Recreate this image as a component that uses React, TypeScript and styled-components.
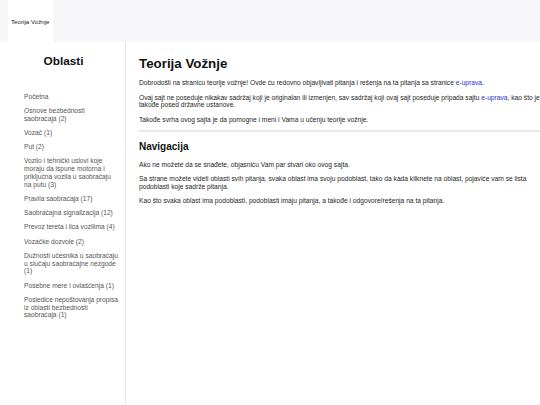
import styled, { createGlobalStyle } from 'styled-components';

const GlobalStyle = createGlobalStyle`
  html, body {
    margin: 0;
    padding: 0;
    background: #fff;
    font-family: "Liberation Sans", Arial, sans-serif;
  }
`;

const TopBar = styled.div`
  height: 42px;
  background: #f7f7f9;
  padding-left: 8px;
  display: flex;
`;

const Tab = styled.div`
  background: #fff;
  display: flex;
  align-items: center;
  padding: 0 3px;
  font-size: 6.2px;
  color: #222;
`;

const Layout = styled.div`
  display: flex;
  min-height: calc(100vh - 42px);
`;

const Sidebar = styled.aside`
  width: 126px;
  flex-shrink: 0;
  border-right: 1px solid #e6e6e6;
  box-sizing: border-box;
`;

const SideTitle = styled.h3`
  margin: 12.5px 0 25px;
  padding-left: 2px;
  text-align: center;
  font-size: 11.8px;
  line-height: 13px;
  font-weight: 700;
  color: #111;
`;

const AreaList = styled.ul`
  list-style: none;
  margin: 0;
  padding: 0 0 0 24px;
  width: 100px;
`;

const AreaItem = styled.li`
  font-size: 6.67px;
  line-height: 7.67px;
  color: #555;
  margin-bottom: 6.67px;
  white-space: pre-line;
`;

const Main = styled.main`
  flex: 1;
  padding-left: 13px;
  color: #1e1e1e;
`;

const Title = styled.h1`
  margin: 13.5px 0 8.5px;
  font-size: 13.33px;
  line-height: 15.3px;
  font-weight: 700;
  color: #111;
`;

const SubTitle = styled.h2`
  margin: 9.25px 0 8px;
  font-size: 10px;
  line-height: 11.5px;
  font-weight: 700;
  color: #111;
`;

const Text = styled.p`
  margin: 0 0 6.67px;
  font-size: 6.67px;
  line-height: 7.67px;
`;

const Link = styled.a`
  color: #2d2dd6;
  text-decoration: none;
`;

const Divider = styled.hr`
  margin: 6px 0 0 -1px;
  border: 0;
  height: 2px;
  background: #e8e8e8;
`;

const areas = [
  'Početna',
  'Osnove bezbednosti\nsaobraćaja (2)',
  'Vozač (1)',
  'Put (2)',
  'Vozilo i tehnički uslovi koje\nmoraju da ispune motorna i\npriključna vozila u saobraćaju\nna putu (3)',
  'Pravila saobraćaja (17)',
  'Saobraćajna signalizacija (12)',
  'Prevoz tereta i lica vozilima (4)',
  'Vozačke dozvole (2)',
  'Dužnosti učesnika u saobraćaju\nu slučaju saobraćajne nezgode\n(1)',
  'Posebne mere i ovlašćenja (1)',
  'Posledice nepoštovanja propisa\niz oblasti bezbednosti\nsaobraćaja (1)',
];

function App() {
  return (
    <>
      <GlobalStyle />
      <TopBar>
        <Tab>Teorija Vožnje</Tab>
      </TopBar>
      <Layout>
        <Sidebar>
          <SideTitle>Oblasti</SideTitle>
          <AreaList>
            {areas.map((a) => (
              <AreaItem key={a}>{a}</AreaItem>
            ))}
          </AreaList>
        </Sidebar>
        <Main>
          <Title>Teorija Vožnje</Title>
          <Text>
            Dobrodošli na stranicu teorije vožnje! Ovde ću redovno objavljivati pitanja i rešenja na ta pitanja sa
            stranice <Link href="#">e-uprava</Link>.
          </Text>
          <Text>
            Ovaj sajt ne poseduje nikakav sadržaj koji je originalan ili izmenjen, sav sadržaj koji ovaj sajt poseduje
            pripada sajtu <Link href="#">e-uprava</Link>, kao što je takođe posed državne ustanove.
          </Text>
          <Text>Takođe svrha ovog sajta je da pomogne i meni i Vama u učenju teorije vožnje.</Text>
          <Divider />
          <SubTitle>Navigacija</SubTitle>
          <Text>Ako ne možete da se snađete, objasniću Vam par stvari oko ovog sajta.</Text>
          <Text>
            Sa strane možete videti oblasti svih pitanja, svaka oblast ima svoju podoblast, tako da kada kliknete na
            oblast, pojaviće vam se lista podoblasti koje sadrže pitanja.
          </Text>
          <Text>
            Kao što svaka oblast ima podoblasti, podoblasti imaju pitanja, a takođe i odgovore/rešenja na ta pitanja.
          </Text>
        </Main>
      </Layout>
    </>
  );
}

export default App;
